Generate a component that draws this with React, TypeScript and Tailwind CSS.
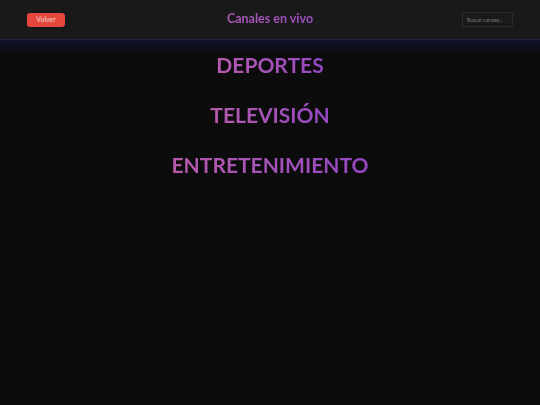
export default function App() {
  const categories = ["DEPORTES", "TELEVISIÓN", "ENTRETENIMIENTO"];

  return (
    <div className="min-h-screen w-full bg-[#0c0c0c] font-['Lato',sans-serif]">
      {/* Header */}
      <header className="relative flex h-10 items-center justify-between border-b border-[#1f2540] bg-[#191919] px-[27px]">
        <button className="h-[14px] w-[38px] rounded-[3px] bg-[#e5473d] text-[7px] leading-none text-[#f3d6d3]">
          Volver
        </button>
        <h1 className="absolute left-1/2 -translate-x-1/2 bg-gradient-to-r from-[#b05ab8] to-[#9a4fc0] bg-clip-text text-[12.5px] font-bold text-transparent">
          Canales en vivo
        </h1>
        <input
          placeholder="Buscar canales..."
          className="h-[15px] w-[51px] rounded-[2px] border border-[#2c2c2c] bg-[#1a1a1a] px-1 text-[5px] text-[#888] placeholder:text-[#7a7a7a] outline-none"
        />
      </header>

      {/* Glow under header */}
      <div className="h-4 w-full bg-gradient-to-b from-[#10132a] to-[#0c0c0c]" />

      {/* Categories */}
      <main className="-mt-[5px] flex flex-col items-center gap-[22px]">
        {categories.map((c) => (
          <h2
            key={c}
            className="bg-gradient-to-r from-[#b75aab] to-[#9347c4] bg-clip-text text-[21px] font-bold leading-[28px] text-transparent"
          >
            {c}
          </h2>
        ))}
      </main>
    </div>
  );
}
